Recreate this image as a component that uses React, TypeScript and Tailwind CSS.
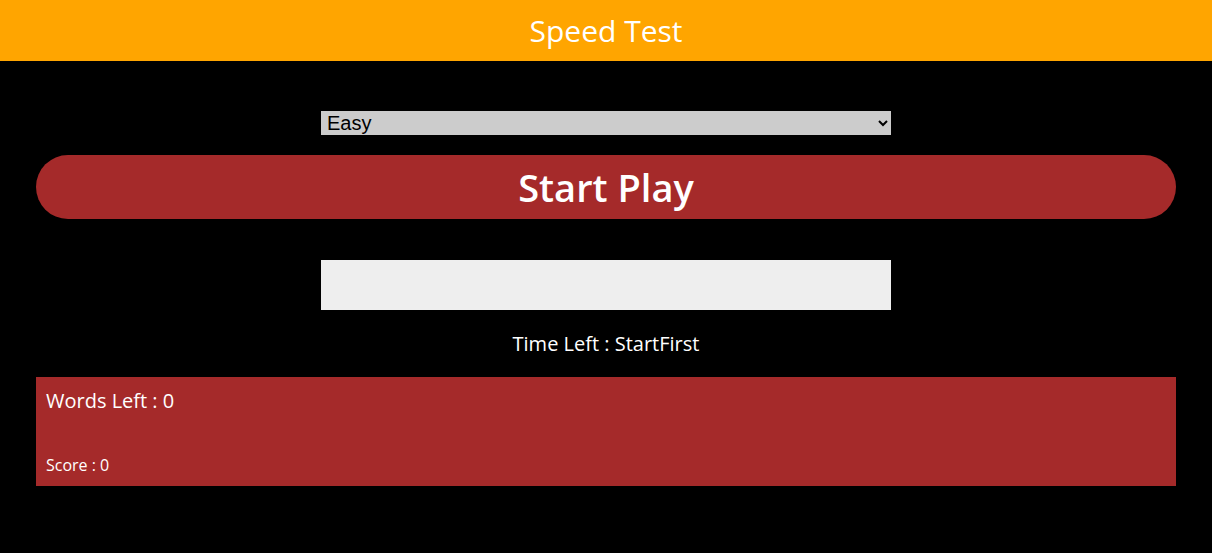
import React, { useState } from 'react';

export default function App() {
  const [level, setLevel] = useState('easy');

  return (
    <div className="min-h-screen bg-black font-['Open_Sans',sans-serif] text-white">
      <header className="flex h-[61px] items-center justify-center bg-[#ffa500]">
        <h1 className="text-[30px] leading-none">Speed Test</h1>
      </header>

      <div className="flex flex-col items-center pt-[50px]">
        <select
          value={level}
          onChange={(e) => setLevel(e.target.value)}
          className="h-[24px] w-[570px] border-0 bg-[#ccc] pl-[2px] font-['Liberation_Sans',Arial,sans-serif] text-[20px] leading-none text-black"
        >
          <option value="easy">Easy</option>
          <option value="medium">Medium</option>
          <option value="hard">Hard</option>
        </select>

        <button className="mt-[20px] flex h-[64px] w-[1140px] items-center justify-center rounded-full bg-[#a52a2a] text-[38px] font-semibold text-white">
          Start Play
        </button>

        <input
          type="text"
          className="mt-[41px] h-[50px] w-[570px] border-0 bg-[#eee] px-2 text-[20px] text-black outline-none"
        />

        <p className="mt-[20px] text-[20px] leading-[27px]">Time Left : StartFirst</p>

        <div className="mt-[20px] flex h-[109px] w-[1140px] flex-col justify-between bg-[#a52a2a] px-[10px] pb-[10px] pt-[10px]">
          <p className="text-[20px] leading-[27px]">Words Left : 0</p>
          <p className="text-[16px] leading-[22px]">Score : 0</p>
        </div>
      </div>
    </div>
  );
}
